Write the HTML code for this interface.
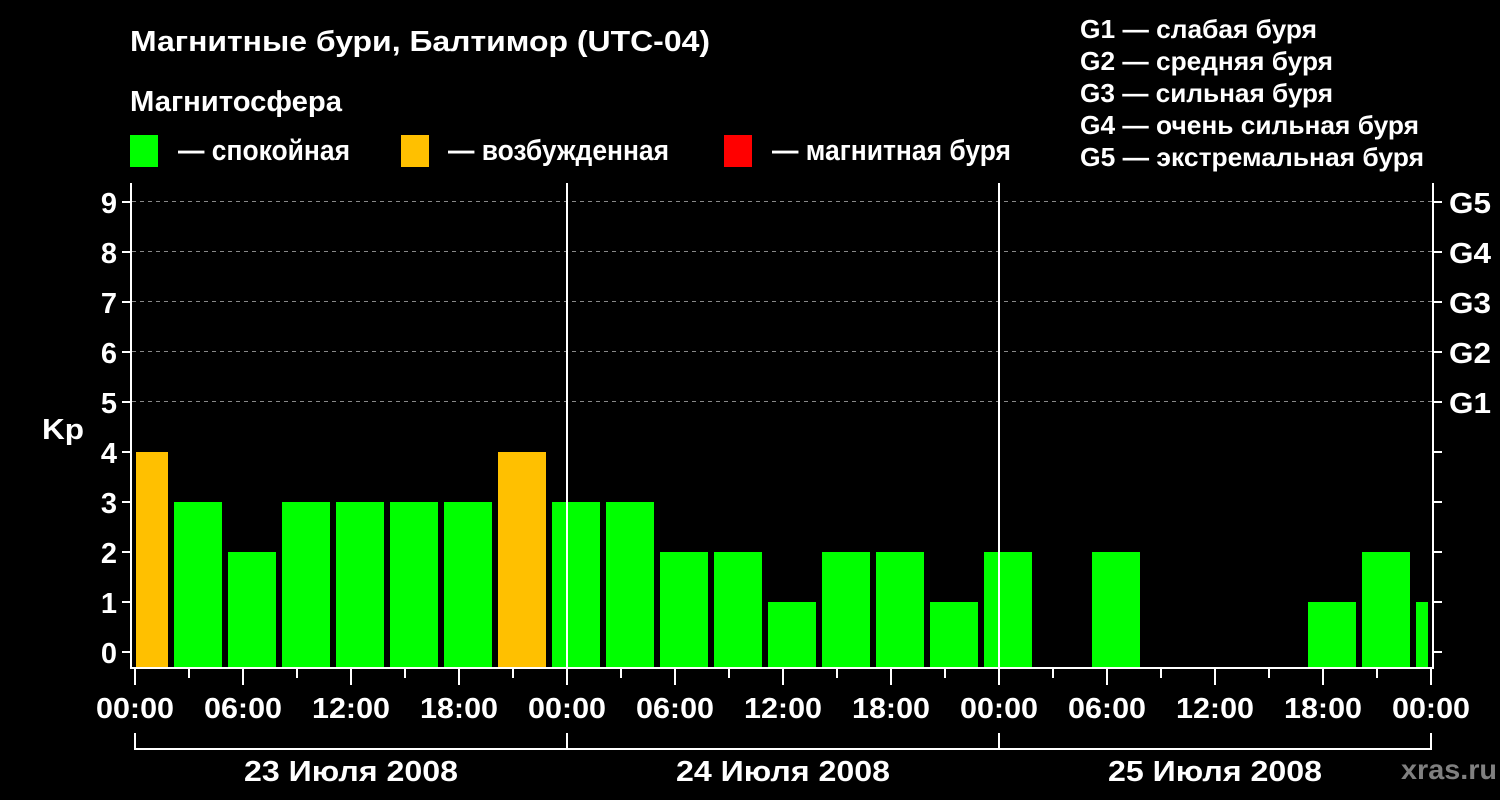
<!DOCTYPE html>
<html><head><meta charset="utf-8"><style>
html,body{margin:0;padding:0;background:#000;}
svg{display:block;}
text{font-family:"Liberation Sans",Arial,sans-serif;font-weight:bold;fill:#fff;}
</style></head><body>
<svg width="1500" height="800" viewBox="0 0 1500 800" xmlns="http://www.w3.org/2000/svg">
<rect width="1500" height="800" fill="#000"/>
<text x="130" y="51" font-size="29" textLength="580" lengthAdjust="spacingAndGlyphs">Магнитные бури, Балтимор (UTC-04)</text>
<text x="130" y="111" font-size="29" textLength="212" lengthAdjust="spacingAndGlyphs">Магнитосфера</text>
<rect x="130" y="135" width="28" height="32" fill="#00ff00"/>
<text x="178" y="160" font-size="29" textLength="172" lengthAdjust="spacingAndGlyphs">— спокойная</text>
<rect x="401" y="135" width="28" height="32" fill="#ffc000"/>
<text x="448" y="160" font-size="29" textLength="221" lengthAdjust="spacingAndGlyphs">— возбужденная</text>
<rect x="724" y="135" width="28" height="32" fill="#ff0000"/>
<text x="772" y="160" font-size="29" textLength="239" lengthAdjust="spacingAndGlyphs">— магнитная буря</text>
<g font-size="26">
<text x="1080" y="38" textLength="237" lengthAdjust="spacingAndGlyphs">G1 — слабая буря</text>
<text x="1080" y="70" textLength="253" lengthAdjust="spacingAndGlyphs">G2 — средняя буря</text>
<text x="1080" y="102" textLength="253" lengthAdjust="spacingAndGlyphs">G3 — сильная буря</text>
<text x="1080" y="134" textLength="339" lengthAdjust="spacingAndGlyphs">G4 — очень сильная буря</text>
<text x="1080" y="166" textLength="344" lengthAdjust="spacingAndGlyphs">G5 — экстремальная буря</text>
</g>
<g stroke="#888" stroke-width="1" stroke-dasharray="4,4">
<line x1="132" y1="201.5" x2="1432" y2="201.5"/>
<line x1="132" y1="251.5" x2="1432" y2="251.5"/>
<line x1="132" y1="301.5" x2="1432" y2="301.5"/>
<line x1="132" y1="351.5" x2="1432" y2="351.5"/>
<line x1="132" y1="401.5" x2="1432" y2="401.5"/>
</g>
<g fill="#00ff00">
<rect x="136" y="452" width="32" height="215" fill="#ffc000"/>
<rect x="174" y="502" width="48" height="165"/>
<rect x="228" y="552" width="48" height="115"/>
<rect x="282" y="502" width="48" height="165"/>
<rect x="336" y="502" width="48" height="165"/>
<rect x="390" y="502" width="48" height="165"/>
<rect x="444" y="502" width="48" height="165"/>
<rect x="498" y="452" width="48" height="215" fill="#ffc000"/>
<rect x="552" y="502" width="48" height="165"/>
<rect x="606" y="502" width="48" height="165"/>
<rect x="660" y="552" width="48" height="115"/>
<rect x="714" y="552" width="48" height="115"/>
<rect x="768" y="602" width="48" height="65"/>
<rect x="822" y="552" width="48" height="115"/>
<rect x="876" y="552" width="48" height="115"/>
<rect x="930" y="602" width="48" height="65"/>
<rect x="984" y="552" width="48" height="115"/>
<rect x="1092" y="552" width="48" height="115"/>
<rect x="1308" y="602" width="48" height="65"/>
<rect x="1362" y="552" width="48" height="115"/>
<rect x="1416" y="602" width="12" height="65"/>
</g>
<g stroke="#fff" stroke-width="2" fill="none">
<path d="M131 183 V668 H1433 V183"/>
<line x1="567" y1="183" x2="567" y2="668"/>
<line x1="999" y1="183" x2="999" y2="668"/>
<path d="M122 652H131M122 602H131M122 552H131M122 502H131M122 452H131M122 402H131M122 352H131M122 302H131M122 252H131M122 202H131"/>
<path d="M1433 652H1442M1433 602H1442M1433 552H1442M1433 502H1442M1433 452H1442M1433 402H1442M1433 352H1442M1433 302H1442M1433 252H1442M1433 202H1442"/>
<path d="M135 669V685M189 669V678M243 669V685M297 669V678M351 669V685M405 669V678M459 669V685M513 669V678M567 669V685M621 669V678M675 669V685M729 669V678M783 669V685M837 669V678M891 669V685M945 669V678M999 669V685M1053 669V678M1107 669V685M1161 669V678M1215 669V685M1269 669V678M1323 669V685M1377 669V678M1431 669V685"/>
<path d="M135 733V749H1431V733M567 733V749M999 733V749"/>
</g>
<g font-size="29" text-anchor="end">
<text x="117" y="663">0</text><text x="117" y="613">1</text><text x="117" y="563">2</text>
<text x="117" y="513">3</text><text x="117" y="463">4</text><text x="117" y="413">5</text>
<text x="117" y="363">6</text><text x="117" y="313">7</text><text x="117" y="263">8</text>
<text x="117" y="213">9</text>
</g>
<text x="42" y="439" font-size="29" textLength="42" lengthAdjust="spacingAndGlyphs">Kp</text>
<g font-size="29">
<text x="1449" y="213" textLength="42" lengthAdjust="spacingAndGlyphs">G5</text><text x="1449" y="263" textLength="42" lengthAdjust="spacingAndGlyphs">G4</text><text x="1449" y="313" textLength="42" lengthAdjust="spacingAndGlyphs">G3</text>
<text x="1449" y="363" textLength="42" lengthAdjust="spacingAndGlyphs">G2</text><text x="1449" y="413" textLength="42" lengthAdjust="spacingAndGlyphs">G1</text>
</g>
<g font-size="29" text-anchor="middle">
<text x="135" y="718" textLength="78" lengthAdjust="spacingAndGlyphs">00:00</text><text x="243" y="718" textLength="78" lengthAdjust="spacingAndGlyphs">06:00</text><text x="351" y="718" textLength="78" lengthAdjust="spacingAndGlyphs">12:00</text><text x="459" y="718" textLength="78" lengthAdjust="spacingAndGlyphs">18:00</text>
<text x="567" y="718" textLength="78" lengthAdjust="spacingAndGlyphs">00:00</text><text x="675" y="718" textLength="78" lengthAdjust="spacingAndGlyphs">06:00</text><text x="783" y="718" textLength="78" lengthAdjust="spacingAndGlyphs">12:00</text><text x="891" y="718" textLength="78" lengthAdjust="spacingAndGlyphs">18:00</text>
<text x="999" y="718" textLength="78" lengthAdjust="spacingAndGlyphs">00:00</text><text x="1107" y="718" textLength="78" lengthAdjust="spacingAndGlyphs">06:00</text><text x="1215" y="718" textLength="78" lengthAdjust="spacingAndGlyphs">12:00</text><text x="1323" y="718" textLength="78" lengthAdjust="spacingAndGlyphs">18:00</text>
<text x="1431" y="718" textLength="78" lengthAdjust="spacingAndGlyphs">00:00</text>
<text x="351" y="781" textLength="214" lengthAdjust="spacingAndGlyphs">23 Июля 2008</text>
<text x="783" y="781" textLength="214" lengthAdjust="spacingAndGlyphs">24 Июля 2008</text>
<text x="1215" y="781" textLength="214" lengthAdjust="spacingAndGlyphs">25 Июля 2008</text>
</g>
<text x="1401" y="779" font-size="28" style="fill:#808080" textLength="96" lengthAdjust="spacingAndGlyphs">xras.ru</text>
</svg>
</body></html>
